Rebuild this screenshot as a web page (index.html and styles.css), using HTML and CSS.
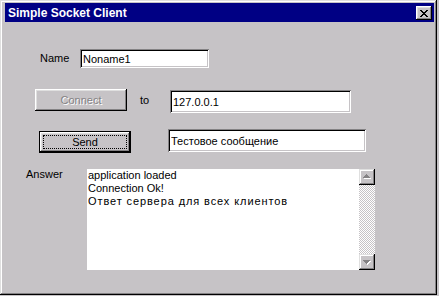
FILE: index.html
```html
<!DOCTYPE html>
<html lang="ru">
<head>
    <meta charset="UTF-8">
    <meta name="viewport" content="width=device-width, initial-scale=1.0">
    <title>Simple Socket Client</title>
    <link rel="stylesheet" href="styles.css">
</head>
<body>
    <div class="window">
        <div class="titlebar">
            <span class="title">Simple Socket Client</span>
            <button class="close" type="button">
                <svg width="8" height="7" viewBox="0 0 8 7" shape-rendering="crispEdges">
                    <rect x="0" y="0" width="2" height="1"/><rect x="6" y="0" width="2" height="1"/>
                    <rect x="1" y="1" width="2" height="1"/><rect x="5" y="1" width="2" height="1"/>
                    <rect x="2" y="2" width="4" height="1"/>
                    <rect x="3" y="3" width="2" height="1"/>
                    <rect x="2" y="4" width="4" height="1"/>
                    <rect x="1" y="5" width="2" height="1"/><rect x="5" y="5" width="2" height="1"/>
                    <rect x="0" y="6" width="2" height="1"/><rect x="6" y="6" width="2" height="1"/>
                </svg>
            </button>
        </div>

        <div class="client">
            <div class="row row-name">
                <label class="label label-name" for="name">Name</label>
                <input class="field field-name" id="name" value="Noname1">
            </div>
            <div class="row row-connect">
                <button class="btn" type="button" disabled>Connect</button>
                <span class="label label-to">to</span>
                <input class="field field-host" id="host" value="127.0.0.1">
            </div>
            <div class="row row-send">
                <button class="btn btn-default" type="button">Send</button>
                <input class="field field-msg" id="msg" value="Тестовое сообщение">
            </div>
            <div class="row row-answer">
                <span class="label label-answer">Answer</span>
                <div class="memo">
                    <div class="memo-text">
                        application loaded<br>
                        Connection Ok!<br>
                        <span class="cyr">Ответ сервера для всех клиентов</span>
                    </div>
                    <div class="scrollbar">
                        <div class="scroll-btn">
                            <svg width="16" height="16" viewBox="0 0 16 16" shape-rendering="crispEdges">
                                <g fill="#fff">
                                    <rect x="8" y="6" width="1" height="1"/><rect x="7" y="7" width="3" height="1"/>
                                    <rect x="6" y="8" width="5" height="1"/><rect x="5" y="9" width="7" height="1"/>
                                </g>
                                <g fill="#848284">
                                    <rect x="7" y="5" width="1" height="1"/><rect x="6" y="6" width="3" height="1"/>
                                    <rect x="5" y="7" width="5" height="1"/><rect x="4" y="8" width="7" height="1"/>
                                </g>
                            </svg>
                        </div>
                        <div class="scroll-track"></div>
                        <div class="scroll-btn">
                            <svg width="16" height="16" viewBox="0 0 16 16" shape-rendering="crispEdges">
                                <g fill="#fff">
                                    <rect x="5" y="7" width="7" height="1"/><rect x="6" y="8" width="5" height="1"/>
                                    <rect x="7" y="9" width="3" height="1"/><rect x="8" y="10" width="1" height="1"/>
                                </g>
                                <g fill="#848284">
                                    <rect x="4" y="6" width="7" height="1"/><rect x="5" y="7" width="5" height="1"/>
                                    <rect x="6" y="8" width="3" height="1"/><rect x="7" y="9" width="1" height="1"/>
                                </g>
                            </svg>
                        </div>
                    </div>
                </div>
            </div>
        </div>
    </div>
</body>
</html>
```

FILE: styles.css
```css
body {
    margin: 0;
    background-color: #c6c3c6;
    font-family: "Liberation Sans", Arial, sans-serif;
    font-size: 11px;
    color: #000;
}
.window {
    width: 437px;
    height: 295px;
    box-sizing: border-box;
    padding: 3px 3px 3px 5px;
    background-color: #c6c3c6;
    box-shadow: inset -1px -1px #000, inset 1px 1px #dfdfdf, inset -2px -2px #848284, inset 2px 2px #fff;
}
.titlebar {
    height: 19px;
    display: flex;
    align-items: center;
    justify-content: space-between;
    background-color: #000084;
}
.title {
    padding-left: 3px;
    color: #fff;
    font-weight: bold;
    font-size: 12px;
}
.close {
    width: 16px;
    height: 14px;
    margin-right: 2px;
    margin-top: 1px;
    padding: 0;
    border: none;
    background-color: #c6c3c6;
    box-shadow: inset -1px -1px #000, inset 1px 1px #fff, inset -2px -2px #848284, inset 2px 2px #dfdfdf;
    display: flex;
    align-items: center;
    justify-content: center;
}
.close svg {
    display: block;
}
.client {
    display: flex;
    flex-direction: column;
}
.row {
    display: flex;
    align-items: flex-start;
}
.label {
    line-height: 13px;
}
.field {
    appearance: none;
    border: none;
    outline: none;
    margin: 0;
    box-sizing: border-box;
    padding: 0 0 0 3px;
    font: inherit;
    color: #000;
    background-color: #fff;
    box-shadow: inset 1px 1px #848284, inset -1px -1px #fff, inset 2px 2px #000, inset -2px -2px #c6c3c6;
}
.btn {
    appearance: none;
    border: none;
    margin: 0;
    padding: 0;
    box-sizing: border-box;
    width: 92px;
    height: 22px;
    font: inherit;
    color: #000;
    background-color: #c6c3c6;
    box-shadow: inset -1px -1px #000, inset 1px 1px #fff, inset -2px -2px #848284, inset 2px 2px #dfdfdf;
}
.btn:disabled {
    color: #848284;
    text-shadow: 1px 1px #fff;
}
.btn-default {
    border: 1px solid #000;
    outline: 1px dotted #000;
    outline-offset: -5px;
}

.row-name {
    margin-top: 27px;
    padding-left: 35px;
    align-items: center;
}
.label-name {
    width: 40px;
}
.field-name {
    width: 129px;
    height: 19px;
}

.row-connect {
    margin-top: 21px;
    padding-left: 30px;
    height: 24px;
}
.label-to {
    margin-left: 13px;
    width: 30px;
    line-height: 22px;
}
.field-host {
    margin-top: 1px;
    width: 181px;
    height: 23px;
}

.row-send {
    margin-top: 16px;
    padding-left: 34px;
    height: 24px;
}
.row-send .btn {
    margin-top: 2px;
}
.field-msg {
    margin-left: 37px;
    width: 198px;
    height: 23px;
}

.row-answer {
    margin-top: 16px;
    padding-left: 21px;
}
.label-answer {
    width: 61px;
    margin-top: -1px;
}
.memo {
    width: 288px;
    height: 101px;
    display: flex;
    background-color: #fff;
}
.memo-text {
    flex: 1;
    padding: 0 0 0 1px;
    line-height: 13px;
}
.cyr {
    letter-spacing: 0.9px;
}
.scrollbar {
    width: 16px;
    display: flex;
    flex-direction: column;
}
.scroll-btn {
    width: 16px;
    height: 16px;
    background-color: #c6c3c6;
    box-shadow: inset -1px -1px #000, inset 1px 1px #dfdfdf, inset -2px -2px #848284, inset 2px 2px #fff;
}
.scroll-btn svg {
    display: block;
}
.scroll-track {
    flex: 1;
    background: repeating-conic-gradient(#fff 0 25%, #c6c3c6 0 50%) 0 0 / 2px 2px;
}
```
